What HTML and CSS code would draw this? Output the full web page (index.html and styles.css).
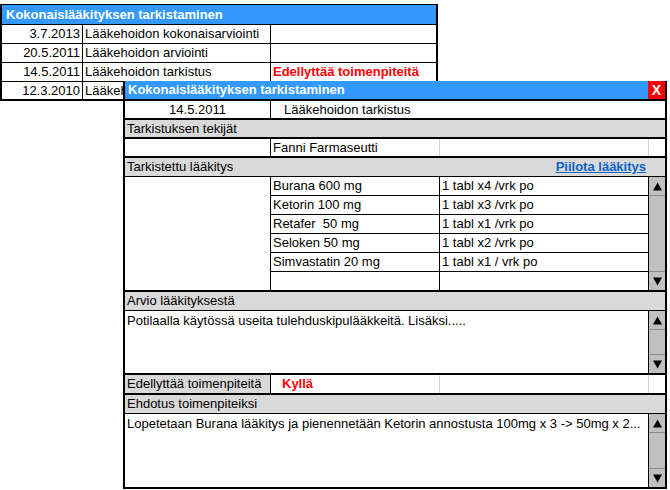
FILE: index.html
```html
<!DOCTYPE html>
<html lang="fi">
<head>
<meta charset="utf-8">
<title>Kokonaislääkityksen tarkistaminen</title>
<link rel="stylesheet" href="styles.css">
</head>
<body>
<div class="bg">
  <div class="bg-head">Kokonaislääkityksen tarkistaminen</div>
  <div class="bg-row"><div class="bc date">3.7.2013</div><div class="bc">Lääkehoidon kokonaisarviointi</div><div class="bc"></div></div>
  <div class="bg-row"><div class="bc date">20.5.2011</div><div class="bc">Lääkehoidon arviointi</div><div class="bc"></div></div>
  <div class="bg-row"><div class="bc date">14.5.2011</div><div class="bc">Lääkehoidon tarkistus</div><div class="bc alert">Edellyttää toimenpiteitä</div></div>
  <div class="bg-row last"><div class="bc date">12.3.2010</div><div class="bc">Lääkehoidon arviointi</div><div class="bc"></div></div>
</div>

<div class="dialog">
  <div class="title">
    <span class="title-text">Kokonaislääkityksen tarkistaminen</span>
    <span class="close">X</span>
  </div>

  <div class="row r-date">
    <div class="cell center">14.5.2011</div>
    <div class="cell bl pad13">Lääkehoidon tarkistus</div>
  </div>

  <div class="section">Tarkistuksen tekijät</div>

  <div class="row r4 thick">
    <div class="cell"></div>
    <div class="cell bl">Fanni Farmaseutti</div>
    <div class="cell bl-light"></div>
    <div class="cell bl-light"></div>
  </div>

  <div class="section thin split">
    <span>Tarkistettu lääkitys</span>
    <a class="link" href="#">Piilota lääkitys</a>
  </div>

  <div class="meds">
    <div class="meds-blank"></div>
    <div class="meds-list">
      <div class="med"><div class="mname">Burana 600 mg</div><div class="mdose">1 tabl x4 /vrk po</div></div>
      <div class="med"><div class="mname">Ketorin 100 mg</div><div class="mdose">1 tabl x3 /vrk po</div></div>
      <div class="med"><div class="mname">Retafer&nbsp; 50 mg</div><div class="mdose">1 tabl x1 /vrk po</div></div>
      <div class="med"><div class="mname">Seloken 50 mg</div><div class="mdose">1 tabl x2 /vrk po</div></div>
      <div class="med"><div class="mname">Simvastatin 20 mg</div><div class="mdose">1 tabl x1 / vrk po</div></div>
      <div class="med"><div class="mname"></div><div class="mdose"></div></div>
    </div>
    <div class="sb">
      <div class="sb-btn up"><svg width="9" height="9" viewBox="0 0 9 9"><polygon points="4.5,0.5 9,8.5 0,8.5" fill="#000"/></svg></div>
      <div class="sb-btn down"><svg width="9" height="9" viewBox="0 0 9 9"><polygon points="0,0.5 9,0.5 4.5,8.5" fill="#000"/></svg></div>
    </div>
  </div>

  <div class="section thin">Arvio lääkityksestä</div>
  <div class="textarea ta1">
    <div class="ta-text">Potilaalla käytössä useita tulehduskipulääkkeitä. Lisäksi.....</div>
    <div class="sb">
      <div class="sb-btn up"><svg width="9" height="9" viewBox="0 0 9 9"><polygon points="4.5,0.5 9,8.5 0,8.5" fill="#000"/></svg></div>
      <div class="sb-btn down"><svg width="9" height="9" viewBox="0 0 9 9"><polygon points="0,0.5 9,0.5 4.5,8.5" fill="#000"/></svg></div>
    </div>
  </div>

  <div class="row r4 thick r-act">
    <div class="cell gray">Edellyttää toimenpiteitä</div>
    <div class="cell bl kylla">Kyllä</div>
    <div class="cell bl-light"></div>
    <div class="cell bl-light"></div>
  </div>

  <div class="section thin s18">Ehdotus toimenpiteiksi</div>
  <div class="textarea ta2">
    <div class="ta-text">Lopetetaan Burana lääkitys ja pienennetään Ketorin annostusta 100mg x 3 -&gt; 50mg x 2...</div>
    <div class="sb">
      <div class="sb-btn up"><svg width="9" height="9" viewBox="0 0 9 9"><polygon points="4.5,0.5 9,8.5 0,8.5" fill="#000"/></svg></div>
      <div class="sb-btn down"><svg width="9" height="9" viewBox="0 0 9 9"><polygon points="0,0.5 9,0.5 4.5,8.5" fill="#000"/></svg></div>
    </div>
  </div>
</div>
</body>
</html>
```

FILE: styles.css
```css
html, body {
  margin: 0;
  padding: 0;
  background: #fff;
}
body {
  font-family: "Liberation Sans", Arial, sans-serif;
  font-size: 13px;
  color: #000;
  width: 670px;
  height: 490px;
  position: relative;
  overflow: hidden;
}

/* Background list */
.bg {
  margin-top: 4px;
  width: 438px;
  box-sizing: border-box;
  border: 2px solid #000;
  border-top-width: 1px;
}
.bg-head {
  height: 19px;
  line-height: 19px;
  background: #3399ff;
  color: #fff;
  font-weight: bold;
  padding-left: 4px;
}
.bg-row {
  display: grid;
  grid-template-columns: 81px 188px 1fr;
  height: 18px;
  border-top: 1px solid #000;
}
.bg-row.last { height: 17px; }
.bc {
  line-height: 18px;
  padding-left: 2px;
  border-right: 1px solid #000;
  white-space: nowrap;
  overflow: hidden;
}
.bc:last-child { border-right: none; }
.bc.date {
  text-align: right;
  padding-left: 0;
  padding-right: 2px;
}
.bc.alert {
  color: #ff0000;
  font-weight: bold;
}

/* Dialog */
.dialog {
  position: absolute;
  left: 123px;
  top: 81px;
  width: 544px;
  box-sizing: border-box;
  border: 2px solid #000;
  border-top: none;
  background: #fff;
}
.title {
  display: flex;
  justify-content: space-between;
  height: 18px;
  background: #3399ff;
  border-bottom: 2px solid #000;
}
.title-text {
  color: #fff;
  font-weight: bold;
  line-height: 18px;
  padding-left: 3px;
}
.close {
  width: 17px;
  background: #ff0000;
  color: #fff;
  font-weight: bold;
  font-size: 14px;
  line-height: 18px;
  text-align: center;
}

.row {
  display: grid;
  border-bottom: 2px solid #000;
}
.r-date {
  grid-template-columns: 145px 1fr;
  height: 17px;
}
.r4 {
  grid-template-columns: 145px 169px 209px 17px;
  height: 17px;
}
.r-act { height: 18px; }
.cell {
  line-height: 17px;
  white-space: nowrap;
  overflow: hidden;
  box-sizing: border-box;
}
.r-act .cell { line-height: 18px; }
.cell.center { text-align: center; }
.cell.bl { border-left: 1px solid #000; padding-left: 2px; }
.cell.bl-light { border-left: 1px solid #d4d4d4; }
.cell.pad13 { padding-left: 13px; }
.cell.gray { background: #d9d9d9; padding-left: 2px; }
.cell.kylla {
  color: #ff0000;
  font-weight: bold;
  padding-left: 11px;
}

.section {
  height: 17px;
  line-height: 17px;
  background: #d9d9d9;
  padding-left: 2px;
  border-bottom: 2px solid #000;
}
.section.thin {
  height: 18px;
  line-height: 18px;
  border-bottom-width: 1px;
}
.section.split {
  display: flex;
  justify-content: space-between;
  padding-right: 19px;
}
.link {
  color: #0a64c8;
  font-weight: bold;
  text-decoration: underline;
}

/* Medication table */
.meds {
  display: grid;
  grid-template-columns: 145px 1fr 17px;
  height: 113px;
  border-bottom: 2px solid #000;
}
.meds-list {
  border-left: 1px solid #000;
}
.med {
  display: grid;
  grid-template-columns: 168px 1fr;
  height: 18px;
  border-bottom: 1px solid #000;
}
.med:last-child { border-bottom: none; }
.mname, .mdose {
  line-height: 18px;
  padding-left: 2px;
  white-space: nowrap;
}
.mdose { border-left: 1px solid #000; }

/* Scrollbars */
.sb {
  box-sizing: border-box;
  width: 17px;
  background: #c0c0c0;
  border-left: 1px solid #000;
  display: flex;
  flex-direction: column;
  justify-content: space-between;
}
.sb-btn {
  height: 18px;
  display: flex;
  align-items: center;
  justify-content: center;
  background: #c0c0c0;
}
.sb-btn.up { border-bottom: 1px solid #8a8a8a; }
.sb-btn.down { border-top: 1px solid #8a8a8a; }

/* Text areas */
.textarea {
  display: flex;
}
.ta1 {
  height: 62px;
  border-bottom: 2px solid #000;
}
.ta2 {
  height: 73px;
}
.ta-text {
  flex: 1;
  padding: 1px 2px 0;
  line-height: 17px;
  white-space: nowrap;
  overflow: hidden;
}
```
